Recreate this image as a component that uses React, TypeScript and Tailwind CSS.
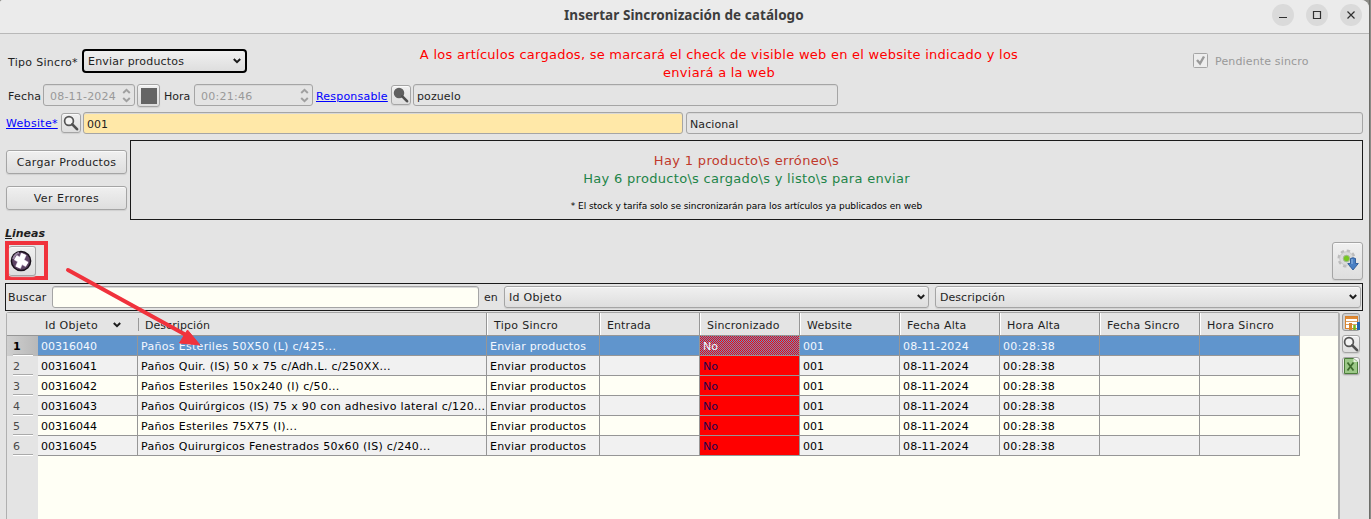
import React from "react";

type Col = { label: string; w: string; ls: string };

const cols: Col[] = [
  { label: "Tipo Sincro", w: "w-[113px]", ls: "tracking-[0.3px]" },
  { label: "Entrada", w: "w-[100px]", ls: "tracking-[0.1px]" },
  { label: "Sincronizado", w: "w-[100px]", ls: "tracking-[0.2px]" },
  { label: "Website", w: "w-[100px]", ls: "tracking-[0.2px]" },
  { label: "Fecha Alta", w: "w-[100px]", ls: "tracking-[0.2px]" },
  { label: "Hora Alta", w: "w-[100px]", ls: "tracking-[0.2px]" },
  { label: "Fecha Sincro", w: "w-[100px]", ls: "tracking-[0.25px]" },
  { label: "Hora Sincro", w: "w-[100px]", ls: "tracking-[0.3px]" },
];

const rows = [
  { id: "00316040", d: "Paños Esteriles 50X50 (L) c/425..." },
  { id: "00316041", d: "Paños Quir. (IS) 50 x 75 c/Adh.L. c/250XX..." },
  { id: "00316042", d: "Paños Esteriles 150x240 (I) c/50..." },
  { id: "00316043", d: "Paños Quirúrgicos (IS) 75 x 90 con adhesivo lateral c/120..." },
  { id: "00316044", d: "Paños Esteriles 75X75 (I)..." },
  { id: "00316045", d: "Paños Quirurgicos Fenestrados 50x60 (IS) c/240..." },
];

const raised =
  "border border-[#a5a5a5] rounded-[3px] bg-linear-to-b from-[#f0f0f0] to-[#dedede] shadow-[inset_0_1px_0_#fafafa,0_1px_1px_#d0d0d0]";
const field = "border border-[#a5a5a5] rounded-[3px] shadow-[inset_0_1px_0_#d8d8d8]";

function Chevron() {
  return (
    <svg width="8" height="6" viewBox="0 0 8 6" className="shrink-0">
      <path d="M0.8 1L4 4.2L7.2 1" fill="none" stroke="#1c1c1c" strokeWidth="2" />
    </svg>
  );
}

function Spin() {
  return (
    <svg width="9" height="15" viewBox="0 0 9 15" className="shrink-0">
      <path d="M1.2 5L4.5 1.8L7.8 5M1.2 10L4.5 13.2L7.8 10" fill="none" stroke="#a0a0a0" strokeWidth="2" />
    </svg>
  );
}

function Lens({ filled = false }: { filled?: boolean }) {
  return (
    <svg width="16" height="16" viewBox="0 0 16 16">
      <circle cx="6" cy="6" r="4.4" fill={filled ? "#606060" : "#f4f4f4"} stroke={filled ? "#606060" : "#555"} strokeWidth="1.7" />
      <path d="M9.3 9.3L14 14.2" stroke="#505050" strokeWidth="2.6" strokeLinecap="round" />
    </svg>
  );
}

function Dither() {
  return (
    <svg width="99" height="19" shapeRendering="crispEdges" className="absolute left-0 top-0 -z-10">
      <defs>
        <pattern id="dither" width="2" height="2" patternUnits="userSpaceOnUse">
          <rect width="2" height="2" fill="#ff0000" />
          <rect x="1" width="1" height="1" fill="#6095cd" />
          <rect y="1" width="1" height="1" fill="#6095cd" />
        </pattern>
      </defs>
      <rect width="99" height="19" fill="url(#dither)" />
    </svg>
  );
}

function Cell({ w, children, cls = "" }: { w: string; children?: React.ReactNode; cls?: string }) {
  return (
    <div className={`${w} shrink-0 h-full border-r border-[#969696] pl-[3px] overflow-hidden whitespace-pre ${cls}`}>{children}</div>
  );
}

export default function App() {
  return (
    <div className="relative w-[1371px] h-[519px] flex overflow-hidden bg-[#8b8b86] font-['DejaVu_Sans',sans-serif] text-[11px] text-[#1f1f1f] leading-[19px] whitespace-nowrap">
      <div className="w-[1369px] h-full flex flex-col bg-[#e4e4e4] rounded-tr-[8px] rounded-tl-[3px] overflow-hidden shrink-0">
        <header className="h-[34px] shrink-0 bg-[#ebebeb] border-b border-[#b8b8b8] flex items-center pl-[564px] pr-[7px]">
          <h1 className="w-[240px] -mt-[3px] text-[13.5px] tracking-[0.06px] font-bold text-[#3d3d3d] font-['Noto_Sans',sans-serif]">Insertar Sincronización de catálogo</h1>
          <div className="ml-auto flex gap-3 -mt-[3px]">
            {["M7 13.5H15", "M7.5 7.5H14.5V14.5H7.5Z", "M7.5 7.5L14.5 14.5M14.5 7.5L7.5 14.5"].map((d) => (
              <svg key={d} width="22" height="22" viewBox="0 0 22 22">
                <circle cx="11" cy="11" r="11" fill="#dadada" />
                <path d={d} fill="none" stroke="#303030" strokeWidth="1.2" />
              </svg>
            ))}
          </div>
        </header>

        <div className="h-[50px] shrink-0 flex pl-2 pt-[15px]">
          <span className="w-[74px] pt-[4px] tracking-[0.3px]">Tipo Sincro*</span>
          <div className="w-[165px] h-[24px] border-2 border-black rounded-[4px] bg-linear-to-b from-[#f0f0f0] to-[#dedede] flex items-center justify-between pl-[4px] pr-[4px]">
            <span className="tracking-[0.2px]">Enviar productos</span>
            <Chevron />
          </div>
          <div className="ml-[161px] w-[622px] -mt-[3px] text-center text-[13px] leading-[18px] text-[#ff0000] tracking-[0.26px]">
            A los artículos cargados, se marcará el check de visible web en el website indicado y los<br />enviará a la web
          </div>
          <div className="ml-[163px] mt-[4px] flex items-start text-[#999]">
            <svg width="16" height="16" viewBox="0 0 16 16">
              <rect x="0.5" y="0.5" width="14" height="14" rx="1" fill="#ededed" stroke="#a5a5a5" />
              <path d="M4 7L7 10.5L11 3.5" fill="none" stroke="#9a9a9a" strokeWidth="2.4" />
            </svg>
            <span className="ml-[6px] -mt-[1px] tracking-[0.15px]">Pendiente sincro</span>
          </div>
        </div>

        <div className="h-[28px] shrink-0 flex pl-2">
          <span className="w-[35px] pt-[3px] tracking-[0.2px]">Fecha</span>
          <div className={`${field} w-[92px] h-[22px] flex items-center justify-between pl-[6px] pr-[3px] text-[#999]`}><span className="tracking-[0.2px] pt-[2px]">08-11-2024</span><Spin /></div>
          <div className={`${raised} ml-[2px] w-[23px] h-[23px] flex items-center justify-center`}><div className="size-4 bg-[#656565]" /></div>
          <span className="ml-[4px] w-[30px] pt-[3px]">Hora</span>
          <div className={`${field} w-[119px] h-[22px] flex items-center justify-between pl-[6px] pr-[3px] text-[#999]`}><span className="tracking-[0.25px] pt-[2px]">00:21:46</span><Spin /></div>
          <span className="ml-[3px] w-[75px] pt-[3px] text-[#0000ff] underline tracking-[0.2px]">Responsable</span>
          <div className={`${raised} mt-[1px] w-[20px] h-[20px] flex items-center justify-center`}><Lens filled /></div>
          <div className={`${field} ml-[2px] w-[425px] h-[22px] pl-[3px] pt-[2px] tracking-[0.1px]`}>pozuelo</div>
        </div>

        <div className="h-[28px] shrink-0 flex pl-[6px]">
          <span className="w-[55px] pt-[2px] text-[#0000ff] underline tracking-[0.3px]">Website*</span>
          <div className={`${raised} mt-[1px] w-[20px] h-[20px] flex items-center justify-center`}><Lens /></div>
          <div className={`${field} ml-[2px] w-[600px] h-[22px] pl-[3px] pt-[2px] bg-[#ffe8a8]`}>001</div>
          <div className={`${field} ml-[3px] w-[677px] h-[22px] pl-[3px] pt-[2px] tracking-[0.1px]`}>Nacional</div>
        </div>

        <div className="h-[80px] shrink-0 flex pl-[6px]">
          <div className="w-[124px] flex flex-col gap-[12px] pt-[10px] text-center">
            <div className={`${raised} w-[121px] h-[24px] leading-[24px] tracking-[0.3px]`}>Cargar Productos</div>
            <div className={`${raised} w-[121px] h-[24px] leading-[24px] tracking-[0.45px]`}>Ver Errores</div>
          </div>
          <div className="w-[1233px] h-[80px] border border-[#1a1a1a] pt-[11px] text-center text-[13px] leading-[18px]">
            <p className="text-[#c0392b] tracking-[0.33px]">Hay 1 producto\s erróneo\s</p>
            <p className="text-[#1e8449] tracking-[0.31px]">Hay 6 producto\s cargado\s y listo\s para enviar</p>
            <p className="text-[9px] leading-[18px] mt-[9px] text-black tracking-[-0.05px]">* El stock y tarifa solo se sincronizarán para los artículos ya publicados en web</p>
          </div>
        </div>

        <div className="h-[63px] shrink-0 pl-[5px] pt-[4px]">
          <div className="h-[17px] font-bold italic"><span className="underline">L</span>ineas</div>
          <div className="flex justify-between pr-[6px]">
            <div className="w-[43px] h-[39px] border-4 border-[#f0323c] flex items-center">
              <div className={`${raised} w-[27px] h-[30px] flex items-center border-l-0`}>
                <svg width="24" height="24" viewBox="0 0 24 24" className="shrink-0">
                  <circle cx="12" cy="12" r="9.6" fill="#5d4464" stroke="#18101a" strokeWidth="1.5" />
                  <path d="M4.2 10A9 9 0 0 1 10 3.600" fill="none" stroke="#9b86a3" strokeWidth="2" />
                  <path d="M6.500 8.500L18 15.500M14.800 5L9 18.500" fill="none" stroke="#c9b9d0" strokeWidth="6" />
                  <path d="M6.500 8.500L18 15.500M14.800 5L9 18.500" fill="none" stroke="#ffffff" strokeWidth="4.800" />
                </svg>
              </div>
            </div>
            <div className={`${raised} w-[31px] h-[38px] flex items-center justify-center mt-[1px]`}>
              <svg width="24" height="24" viewBox="0 0 24 24" className="shrink-0">
                <circle cx="10.500" cy="9.500" r="7.500" fill="none" stroke="#bcbcbc" strokeWidth="3" strokeDasharray="3.200 2.690" />
                <circle cx="10.500" cy="9.500" r="6.800" fill="#dadada" stroke="#c4c4c4" strokeWidth="0.800" />
                <circle cx="10.500" cy="9.500" r="3.200" fill="#76c81f" stroke="#a3b596" />
                <path d="M14.500 9.500Q17 8 19.500 9.500V14.500H22.300L17 21L11.800 14.500H14.500Z" fill="#4a80c4" stroke="#2c5a98" strokeWidth="0.900" />
                <path d="M16 10V15" stroke="#8fb4e0" strokeWidth="1.200" />
              </svg>
            </div>
          </div>
        </div>

        <div className="ml-[5px] w-[1358px] h-[28px] shrink-0 border border-[#1a1a1a] flex items-center pl-[2px]">
          <span className="w-[44px] tracking-[0.15px]">Buscar</span>
          <div className={`${field} w-[427px] h-[22px] bg-[#fffff5]`} />
          <span className="ml-[5px] w-[20px]">en</span>
          <div className={`${raised} w-[425px] h-[22px] flex items-center justify-between pl-[4px] pr-[3px] tracking-[0.3px]`}>Id Objeto<Chevron /></div>
          <div className={`${raised} ml-[6px] w-[426px] h-[22px] flex items-center justify-between pl-[4px] pr-[3px] tracking-[0.05px]`}>Descripción<Chevron /></div>
        </div>

        <div className="flex flex-1 pl-[6px] pt-[1px]">
          <div className="w-[1334px] border-2 border-b-0 border-[#b0b0b0] border-t-[#a5a5a5] border-t-1 border-l-1 rounded-t-[3px] bg-[#fffff5] flex flex-col">
            <div className="h-[23px] shrink-0 bg-[#e4e4e4] flex leading-[25px]">
              <div className="w-[130px] h-full pl-[38px] border-b border-[#969696] flex items-center gap-[15px] tracking-[0.3px]"><span className="pt-[2px]">Id Objeto</span><span className="pt-[2px] flex items-center"><Chevron /></span></div>
              <div className="w-[350px] h-full border-b border-r border-[#969696] flex items-center"><div className="w-px h-[13px] ml-[1px] mr-[6px] bg-[#999]" /><span className="pt-[2px] tracking-[0.05px]">Descripción</span></div>
              {cols.map((c) => (
                <div key={c.label} className={`${c.w} ${c.ls} h-full border-b border-r border-[#969696] pl-[7px] shadow-[inset_1px_0_0_#fff]`}>{c.label}</div>
              ))}
            </div>
            <div className="flex flex-1">
              <div className="w-[31px] bg-[#e4e4e4] text-[#4a4a4a] leading-[21px]">
                {rows.map((r, i) => (
                  <div key={r.id} className={`h-[20px] pl-[6px] pr-[4px] ${i === 0 ? "bg-linear-to-r from-[#cfcfcf] to-[#b8b8b8] font-bold text-black" : ""}`}>
                    <div className="h-[19px] w-[20px] border-b border-[#aaa] shadow-[0_1px_0_#fff]">{i + 1}</div>
                  </div>
                ))}
              </div>
              <div className="w-[1262px] leading-[21px]">
                {rows.map((r, i) => (
                  <div key={r.id} className={`flex h-[20px] border-b border-[#969696] ${i === 0 ? "bg-[#6095cd] text-[#f4f8ff]" : i % 2 ? "bg-[#f1f1f1] text-black" : "bg-[#fffff5] text-black"}`}>
                    <Cell w="w-[100px]">{r.id}</Cell>
                    <Cell w="w-[349px]" cls="tracking-[0.31px]">{r.d}</Cell>
                    <Cell w="w-[113px]" cls="tracking-[0.2px]">Enviar productos</Cell>
                    <Cell w="w-[100px]" />
                    <Cell w="w-[100px]" cls={i === 0 ? "relative isolate" : "bg-[#ff0000] text-[#1c0450]"}>{i === 0 && <Dither />}No</Cell>
                    <Cell w="w-[100px]">001</Cell>
                    <Cell w="w-[100px]" cls="tracking-[0.2px]">08-11-2024</Cell>
                    <Cell w="w-[100px]" cls="tracking-[0.35px]">00:28:38</Cell>
                    <Cell w="w-[100px]" />
                    <Cell w="w-[100px]" />
                  </div>
                ))}
              </div>
            </div>
          </div>
          <div className="ml-[2px] flex flex-col gap-[4px] pt-[1px]">
            <div className="size-[18px] border border-[#999] rounded-[3px] bg-[#d0d0d0]">
              <svg width="18" height="18" viewBox="0 0 18 18">
                <rect x="2.500" y="2.500" width="12" height="12" fill="#fff" stroke="#d9822b" />
                <path d="M3 4H14" stroke="#e08a35" strokeWidth="2" />
                <path d="M3 7.500H14M3 10.500H14" stroke="#d9a066" />
                <path d="M7.500 16V9" stroke="#d9822b" strokeWidth="3" />
                <path d="M11.500 16V11" stroke="#73b81e" strokeWidth="2.500" />
                <path d="M15.500 16V8" stroke="#2464b0" strokeWidth="3" />
              </svg>
            </div>
            <div className={`${raised} size-[18px]`}><Lens /></div>
            <div className={`${raised} size-[18px]`}>
              <svg width="16" height="16" viewBox="0 0 16 16">
                <path d="M1.500 0.500H10.500L14.500 4V15.500H1.500Z" fill="#9cc888" stroke="#4b7d3a" />
                <path d="M10.500 0.500V4H14.500Z" fill="#e4f2dc" />
                <path d="M4.500 4.500L10.500 12.500M10.500 4.500L4.500 12.500" stroke="#3c6b2c" strokeWidth="1.800" />
              </svg>
            </div>
          </div>
        </div>
      </div>
      <div className="w-px h-full bg-[#6d6d69]" />
      <svg className="absolute left-0 top-0 pointer-events-none" width="260" height="360" viewBox="0 0 260 360">
        <path d="M68 270L186 335" stroke="#f0323c" strokeWidth="4" strokeLinecap="round" />
        <path d="M200 345L179.500 343L187.500 330Z" fill="#f0323c" stroke="#f0323c" />
      </svg>
    </div>
  );
}
